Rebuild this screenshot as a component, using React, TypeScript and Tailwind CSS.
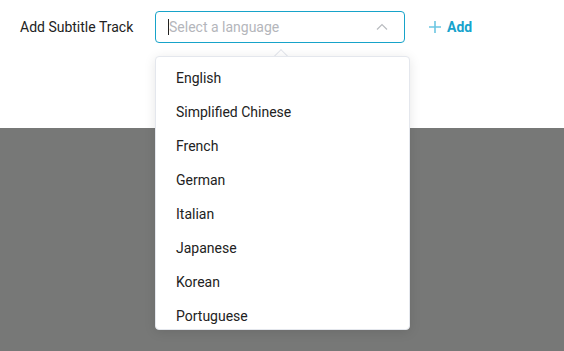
const languages = [
  'English',
  'Simplified Chinese',
  'French',
  'German',
  'Italian',
  'Japanese',
  'Korean',
  'Portuguese',
];

export default function App() {
  return (
    <div className="relative h-[351px] w-[564px] overflow-hidden font-['Roboto',sans-serif] bg-[#777877]">
      <div className="flex h-[128px] items-start bg-white pt-[11px]">
        <div className="flex h-8 items-center">
          <label className="w-[155px] shrink-0 pl-5 text-[14px] text-[#222]">Add Subtitle Track</label>
          <div className="flex h-8 w-[250px] items-center rounded border border-[#17a3c9] bg-white pl-3 pr-4">
            <span className="h-4 w-px bg-[#222]" />
            <span className="flex-1 text-[14px] text-[#b4b6bb]">Select a language</span>
            <svg width="12" height="8" viewBox="0 0 12 8" fill="none" stroke="#b9bcc0" strokeWidth="1.2">
              <path d="M1 6.5 6 1.5 11 6.5" />
            </svg>
          </div>
          <button className="ml-6 flex items-center gap-1.5 text-[14px] font-bold text-[#17a3cc]">
            <svg width="12" height="12" viewBox="0 0 12 12" stroke="#6cc6e2" strokeWidth="1.6">
              <path d="M6 0v12M0 6h12" />
            </svg>
            Add
          </button>
        </div>
      </div>

      <div className="absolute left-[155px] top-[56px] w-[255px]">
        <div className="absolute -top-[5px] left-[121px] h-[10px] w-[10px] rotate-45 border-l border-t border-[#e4e7ed] bg-white" />
        <ul className="relative h-[274px] overflow-hidden rounded border border-[#e4e7ed] bg-white pt-1 shadow-[0_2px_12px_rgba(0,0,0,0.1)]">
          {languages.map(lang => (
            <li key={lang} className="flex h-[34px] items-center px-5 text-[14px] text-[#222]">
              {lang}
            </li>
          ))}
        </ul>
      </div>
    </div>
  );
}
